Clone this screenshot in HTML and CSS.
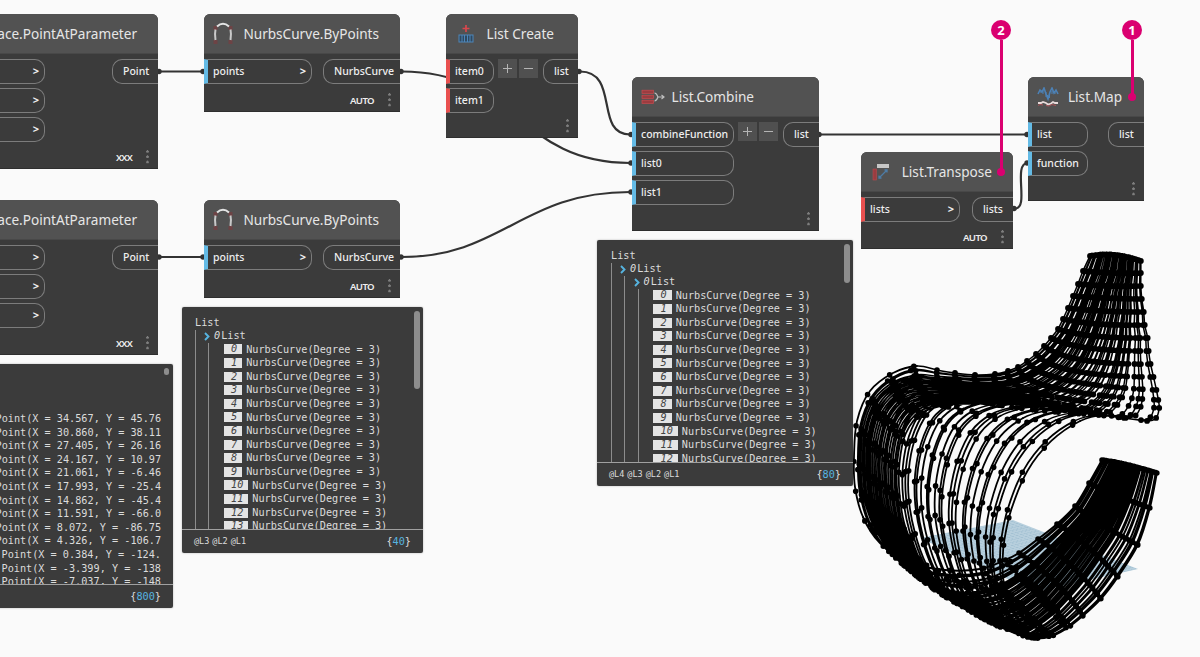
FILE: index.html
```html
<!DOCTYPE html>
<html lang="en">
<head>
<meta charset="utf-8">
<title>Node graph</title>
<link rel="stylesheet" href="styles.css">
</head>
<body>
<main class="canvas">
  <svg class="layer" width="1200" height="657" viewBox="0 0 1200 657">
    <defs>
      <pattern id="grid" width="5" height="4" patternUnits="userSpaceOnUse" patternTransform="matrix(1 .38 -1 .22 0 0)">
        <rect width="5" height="4" fill="#b7cfdd"/><path d="M0 0H5M0 0V4" stroke="#91b3c8" stroke-width=".7"/>
      </pattern>
    </defs>
    <polygon points="1013,520 1138,569 1035,592 920,538" fill="url(#grid)"/>
    <g id="mesh"></g>
  </svg>
  <svg class="layer" width="1200" height="657" viewBox="0 0 1200 657">
    <g class="wire">
      <path d="M160 71.500H203M160 257H203"/>
      <path d="M402 71.500C517 71.500 517 163 630 163"/>
      <path d="M402 257C502 257 522 192 630 192"/>
      <path d="M580 71.500C620 71.500 594 134.500 630 134.500"/>
      <path d="M820 134.500H1028"/>
      <path d="M1015 208.500C1030 208.500 1012 163 1028 163"/>
    </g>
    <g class="knob">
      <circle cx="159" cy="71.500" r="2.700"/><circle cx="203" cy="71.500" r="2.700"/>
      <circle cx="159" cy="257" r="2.700"/><circle cx="203" cy="257" r="2.700"/>
      <circle cx="401" cy="71.500" r="2.700"/><circle cx="401" cy="257" r="2.700"/>
      <circle cx="579" cy="71.500" r="2.700"/><circle cx="631" cy="134.500" r="2.700"/>
      <circle cx="631" cy="163" r="2.700"/><circle cx="631" cy="192" r="2.700"/>
      <circle cx="819" cy="134.500" r="2.700"/><circle cx="1027" cy="134.500" r="2.700"/>
      <circle cx="1014" cy="208.500" r="2.700"/><circle cx="1027" cy="163" r="2.700"/>
    </g>
  </svg>

  <section class="node surface-a">
    <header class="head"><h2 class="title">Surface.PointAtParameter</h2></header>
    <div class="body">
      <div class="ports in"><div class="port"><b class="lace">&gt;</b></div><div class="port"><b class="lace">&gt;</b></div><div class="port"><b class="lace">&gt;</b></div></div>
      <div class="ports out"><div class="port">Point</div></div>
    </div>
    <footer class="foot"><span class="mode">XXX</span><i class="dots"></i></footer>
  </section>

  <section class="node surface-b">
    <header class="head"><h2 class="title">Surface.PointAtParameter</h2></header>
    <div class="body">
      <div class="ports in"><div class="port"><b class="lace">&gt;</b></div><div class="port"><b class="lace">&gt;</b></div><div class="port"><b class="lace">&gt;</b></div></div>
      <div class="ports out"><div class="port">Point</div></div>
    </div>
    <footer class="foot"><span class="mode">XXX</span><i class="dots"></i></footer>
  </section>

  <section class="node curve-a">
    <header class="head">
      <svg class="icon" width="20" height="24" viewBox="0 0 20 24"><path d="M.5 4h4v4h-4zM15.500 4h4v4h-4zM.5 18h4v4h-4zM15.500 18h4v4h-4z" fill="#6d4345"/><g fill="none" stroke="#e4e4e4" stroke-width="2"><path d="M4 4.500Q10 -1 16 4.500"/><path d="M2.500 7.500Q1.500 12 2.500 18M17.500 7.500Q18.500 12 17.500 18" stroke="#c9c9c9"/></g></svg>
      <h2 class="title">NurbsCurve.ByPoints</h2>
    </header>
    <div class="body">
      <div class="ports in"><div class="port blue">points<b class="lace">&gt;</b></div></div>
      <div class="ports out"><div class="port">NurbsCurve</div></div>
    </div>
    <footer class="foot"><span class="mode">AUTO</span><i class="dots"></i></footer>
  </section>

  <section class="node curve-b">
    <header class="head">
      <svg class="icon" width="20" height="24" viewBox="0 0 20 24"><path d="M.5 4h4v4h-4zM15.500 4h4v4h-4zM.5 18h4v4h-4zM15.500 18h4v4h-4z" fill="#6d4345"/><g fill="none" stroke="#e4e4e4" stroke-width="2"><path d="M4 4.500Q10 -1 16 4.500"/><path d="M2.500 7.500Q1.500 12 2.500 18M17.500 7.500Q18.500 12 17.500 18" stroke="#c9c9c9"/></g></svg>
      <h2 class="title">NurbsCurve.ByPoints</h2>
    </header>
    <div class="body">
      <div class="ports in"><div class="port blue">points<b class="lace">&gt;</b></div></div>
      <div class="ports out"><div class="port">NurbsCurve</div></div>
    </div>
    <footer class="foot"><span class="mode">AUTO</span><i class="dots"></i></footer>
  </section>

  <section class="node create">
    <header class="head">
      <svg class="icon" width="16" height="20" viewBox="0 0 16 20"><path d="M8 1v7M4.500 4.500h7" stroke="#d9474d" stroke-width="1.700"/><rect x="1" y="11" width="14" height="7" fill="#30495f" stroke="#4c86ba"/><path d="M4 11v7M6.500 11v7M9.500 11v7M12 11v7" stroke="#4c86ba"/></svg>
      <h2 class="title">List Create</h2>
    </header>
    <div class="body">
      <div class="ports in"><div class="port red">item0</div><div class="port red">item1</div></div>
      <div class="steps"><span class="step plus"></span><span class="step"></span></div>
      <div class="ports out"><div class="port">list</div></div>
    </div>
    <footer class="foot"><i class="dots"></i></footer>
  </section>

  <section class="node combine">
    <header class="head">
      <svg class="icon" width="24" height="16" viewBox="0 0 24 16"><g fill="#9c3c40" stroke="#c94a4f" stroke-width=".7"><rect x="1" y="1.200" width="11.500" height="3.200"/><rect x="1" y="6.200" width="11.500" height="3.200"/><rect x="1" y="11.200" width="11.500" height="3.200"/></g><path d="M13.500 4q2 0 3.500 4h6M13.500 12q2 0 3.500-4M20.500 6l2.500 2-2.500 2" fill="none" stroke="#bdbdbd" stroke-width="1.200"/></svg>
      <h2 class="title">List.Combine</h2>
    </header>
    <div class="body">
      <div class="ports in"><div class="port blue">combineFunction</div><div class="port blue">list0</div><div class="port blue">list1</div></div>
      <div class="steps"><span class="step plus"></span><span class="step"></span></div>
      <div class="ports out"><div class="port">list</div></div>
    </div>
    <footer class="foot"><i class="dots"></i></footer>
  </section>

  <section class="node transpose">
    <header class="head">
      <svg class="icon" width="18" height="18" viewBox="0 0 18 18"><rect x="5" y="1" width="12" height="4" fill="#c6c6c6"/><rect x="1" y="6" width="3.500" height="11" fill="#9b3c40" stroke="#b84a4e" stroke-width=".6"/><path d="M7.500 14.500l7-7M7 12.500v2.500h2.500M12.500 7h2.500v2.500" stroke="#4d7ca6" stroke-width="1.300" fill="none"/></svg>
      <h2 class="title">List.Transpose</h2>
    </header>
    <div class="body">
      <div class="ports in"><div class="port red">lists<b class="lace">&gt;</b></div></div>
      <div class="ports out"><div class="port">lists</div></div>
    </div>
    <footer class="foot"><span class="mode">AUTO</span><i class="dots"></i></footer>
  </section>

  <section class="node map">
    <header class="head">
      <svg class="icon" width="22" height="20" viewBox="0 0 22 20"><path d="M1 7l2-4 2 2 2-4 2 6 2 5 2-7 2-4 2 5 2-3 2 4" fill="none" stroke="#4c80b4" stroke-width="1.600"/><path d="M9 5v5M10.500 8v4M12.500 6v5M6 3v4M15 4v3M4 3v3M18 4v3" stroke="#4c80b4"/><path d="M1 16h3l2-1 3 1 2 1.500 3-1 2-1.500 2 1h3" fill="none" stroke="#e7dada" stroke-width="1.800"/><path d="M1 18.500l2-1 3 .5M9 18.500l3 .5 3-1.500 4 1" fill="none" stroke="#a95055"/></svg>
      <h2 class="title">List.Map</h2>
    </header>
    <div class="body">
      <div class="ports in"><div class="port blue">list</div><div class="port blue">function</div></div>
      <div class="ports out"><div class="port">list</div></div>
    </div>
    <footer class="foot"><i class="dots"></i></footer>
  </section>

  <section class="panel points">
    <div class="rows">
      <p class="row">Point(X = 34.567, Y = 45.76</p>
      <p class="row">Point(X = 30.860, Y = 38.11</p>
      <p class="row">Point(X = 27.405, Y = 26.16</p>
      <p class="row">Point(X = 24.167, Y = 10.97</p>
      <p class="row">Point(X = 21.061, Y = -6.46</p>
      <p class="row">Point(X = 17.993, Y = -25.4</p>
      <p class="row">Point(X = 14.862, Y = -45.4</p>
      <p class="row">Point(X = 11.591, Y = -66.0</p>
      <p class="row">Point(X = 8.072, Y = -86.75</p>
      <p class="row">Point(X = 4.326, Y = -106.7</p>
      <p class="row">Point(X = 0.384, Y = -124.</p>
      <p class="row">Point(X = -3.399, Y = -138</p>
      <p class="row">Point(X = -7.037, Y = -148</p>
    </div>
    <i class="thumb"></i>
    <footer class="sum"><span></span><span>{<em class="count">800</em>}</span></footer>
  </section>

  <section class="panel forty">
    <div class="rows">
      <p class="row">List</p>
      <div class="branch">
        <p class="row sub"><svg width="6" height="9" viewBox="0 0 6 9"><path d="M1 1l3.500 3.500L1 8" fill="none" stroke="#56b4e0" stroke-width="1.900"/></svg><i>0</i>List</p>
        <div class="branch">
          <p class="row"><i class="idx">0</i>NurbsCurve(Degree = 3)</p>
          <p class="row"><i class="idx">1</i>NurbsCurve(Degree = 3)</p>
          <p class="row"><i class="idx">2</i>NurbsCurve(Degree = 3)</p>
          <p class="row"><i class="idx">3</i>NurbsCurve(Degree = 3)</p>
          <p class="row"><i class="idx">4</i>NurbsCurve(Degree = 3)</p>
          <p class="row"><i class="idx">5</i>NurbsCurve(Degree = 3)</p>
          <p class="row"><i class="idx">6</i>NurbsCurve(Degree = 3)</p>
          <p class="row"><i class="idx">7</i>NurbsCurve(Degree = 3)</p>
          <p class="row"><i class="idx">8</i>NurbsCurve(Degree = 3)</p>
          <p class="row"><i class="idx">9</i>NurbsCurve(Degree = 3)</p>
          <p class="row"><i class="idx">10</i>NurbsCurve(Degree = 3)</p>
          <p class="row"><i class="idx">11</i>NurbsCurve(Degree = 3)</p>
          <p class="row"><i class="idx">12</i>NurbsCurve(Degree = 3)</p>
          <p class="row"><i class="idx">13</i>NurbsCurve(Degree = 3)</p>
        </div>
      </div>
    </div>
    <i class="thumb"></i>
    <footer class="sum"><span class="levels"><span>@L3</span><span>@L2</span><span>@L1</span></span><span>{<em class="count">40</em>}</span></footer>
  </section>

  <section class="panel eighty">
    <div class="rows">
      <p class="row">List</p>
      <div class="branch">
        <p class="row sub"><svg width="6" height="9" viewBox="0 0 6 9"><path d="M1 1l3.500 3.500L1 8" fill="none" stroke="#56b4e0" stroke-width="1.900"/></svg><i>0</i>List</p>
        <div class="branch">
          <p class="row sub"><svg width="6" height="9" viewBox="0 0 6 9"><path d="M1 1l3.500 3.500L1 8" fill="none" stroke="#56b4e0" stroke-width="1.900"/></svg><i>0</i>List</p>
          <div class="branch">
            <p class="row"><i class="idx">0</i>NurbsCurve(Degree = 3)</p>
            <p class="row"><i class="idx">1</i>NurbsCurve(Degree = 3)</p>
            <p class="row"><i class="idx">2</i>NurbsCurve(Degree = 3)</p>
            <p class="row"><i class="idx">3</i>NurbsCurve(Degree = 3)</p>
            <p class="row"><i class="idx">4</i>NurbsCurve(Degree = 3)</p>
            <p class="row"><i class="idx">5</i>NurbsCurve(Degree = 3)</p>
            <p class="row"><i class="idx">6</i>NurbsCurve(Degree = 3)</p>
            <p class="row"><i class="idx">7</i>NurbsCurve(Degree = 3)</p>
            <p class="row"><i class="idx">8</i>NurbsCurve(Degree = 3)</p>
            <p class="row"><i class="idx">9</i>NurbsCurve(Degree = 3)</p>
            <p class="row"><i class="idx">10</i>NurbsCurve(Degree = 3)</p>
            <p class="row"><i class="idx">11</i>NurbsCurve(Degree = 3)</p>
            <p class="row"><i class="idx">12</i>NurbsCurve(Degree = 3)</p>
          </div>
        </div>
      </div>
    </div>
    <i class="thumb"></i>
    <footer class="sum"><span class="levels"><span>@L4</span><span>@L3</span><span>@L2</span><span>@L1</span></span><span>{<em class="count">80</em>}</span></footer>
  </section>

  <div class="callout one"><span class="badge">1</span><i class="stem"></i></div>
  <div class="callout two"><span class="badge">2</span><i class="stem"></i></div>
</main>
<script src="mesh.js"></script>
</body>
</html>
```
FILE: styles.css
```css
* { box-sizing: border-box; }
body { margin: 0; background: #fafafa; font-family: "Noto Sans", "Open Sans", sans-serif; }
.canvas { position: relative; width: 1200px; height: 657px; overflow: hidden; }
.layer { position: absolute; left: 0; top: 0; }
.wire { fill: none; stroke: #333; stroke-width: 2.2; }
.knob { fill: #333; }

.node { position: absolute; display: flex; flex-direction: column; background: #3b3b3b; border-radius: 6px 6px 0 0; overflow: hidden; border-bottom: 1px solid #2e2e2e; color: #eee; }
.surface-a { left: -62px; top: 14px; width: 220px; height: 155px; }
.surface-b { left: -62px; top: 200px; width: 220px; height: 155px; }
.curve-a { left: 204px; top: 14px; width: 196px; height: 98px; }
.curve-b { left: 204px; top: 200px; width: 196px; height: 98px; }
.create { left: 446px; top: 14px; width: 132px; height: 124px; }
.combine { left: 632px; top: 77px; width: 187px; height: 154px; }
.transpose { left: 861px; top: 152px; width: 152px; height: 97px; }
.map { left: 1028px; top: 77px; width: 116px; height: 124px; }

.head { height: 40px; flex: none; background: #525252; display: flex; align-items: center; padding: 0 21px 0 9px; border-bottom: 1px solid #484848; }
.icon { flex: none; }
.title { margin: 0 0 0 auto; font-size: 13.6px; font-weight: 400; white-space: nowrap; color: #e6e6e6; }
.create .head { padding: 0 24px 0 12px; }
.combine .head { padding-right: 65px; }
.transpose .head { padding-left: 11px; }
.map .head { padding-right: 22px; }

.body { flex: 1; display: flex; align-items: flex-start; padding-top: 5px; }
.ports { display: flex; flex-direction: column; gap: 4px; }
.out { margin-left: auto; }
.port { height: 25px; display: flex; align-items: center; font-size: 10.5px; font-weight: 500; color: #eee; border: 1px solid #7c7c7c; white-space: nowrap; }
.in .port { border-left: 0; border-radius: 0 10px 10px 0; padding: 0 5px 2px 9px; }
.out .port { border-right: 0; border-radius: 10px 0 0 10px; padding: 0 9px 2px 10px; }
.in .blue { border-left: 4px solid #64bbe6; padding-left: 5px; }
.in .red { border-left: 4px solid #e9504f; padding-left: 5px; }
.lace { margin-left: auto; font-size: 11px; }
.surface-a .in, .surface-b .in { width: 107px; }
.surface-a .out, .surface-b .out { width: 46px; }
.curve-a .in, .curve-b .in { width: 108px; }
.curve-a .out, .curve-b .out { width: 77px; }
.create .in { width: 48px; }
.create .out { width: 35px; }
.combine .in { width: 102px; }
.combine .out { width: 36px; }
.transpose .in { width: 99px; }
.transpose .out { width: 41px; }
.map .in { width: 60px; }
.map .out { width: 36px; }

.steps { display: flex; gap: 2px; margin-left: 4px; }
.step { width: 19px; height: 19px; background: linear-gradient(#b4b4b4, #b4b4b4) center / 9px 1px no-repeat #505050; }
.plus { background: linear-gradient(#b4b4b4, #b4b4b4) center / 9px 1px no-repeat, linear-gradient(#b4b4b4, #b4b4b4) center / 1px 9px no-repeat #505050; }

.foot { height: 23px; flex: none; display: flex; justify-content: flex-end; align-items: center; gap: 14px; padding-right: 9px; font-size: 9.6px; font-weight: 600; }
.mode { letter-spacing: -.8px; margin-top: 1px; }
.dots { width: 3px; height: 14px; background: radial-gradient(circle at 1.5px 1.5px, #7e7e7e 1.1px, transparent 1.5px) 0 0 / 3px 5.3px; }
.curve-a .mode, .curve-b .mode, .transpose .mode { letter-spacing: -.6px; }

.panel { position: absolute; display: flex; flex-direction: column; background: #3b3b3b; border-radius: 2px; overflow: hidden; box-shadow: 0 0 2px rgba(0, 0, 0, .3); font: 10.2px/13.65px "DejaVu Sans Mono", monospace; color: #dcdcdc; }
.points { left: -20px; top: 364px; width: 193px; height: 244px; }
.forty { left: 182px; top: 307px; width: 241px; height: 246px; }
.eighty { left: 597px; top: 240px; width: 256px; height: 246px; }
.rows { flex: 1; min-height: 0; overflow: hidden; padding: 9px 0 0 13px; }
.points .rows { padding: 48px 0 0 15.5px; }
.eighty .rows { padding-left: 14px; }
.points .row:nth-child(n+11) { padding-left: 6px; }
.row { margin: 0; height: 13.6px; white-space: pre; display: flex; align-items: center; }
.branch { border-left: 1px solid #8c8c8c; padding-left: 12px; }
.forty .branch .branch { padding-left: 12.5px; }
.eighty .branch .branch { padding-left: 12.5px; }
.sub { margin-left: -4px; height: 13px; gap: 1px; }
.sub i { margin-left: 3px; }
.branch .branch .row .idx { margin-left: 2px; }
.idx { background: #e4e4e4; color: #444; height: 10px; line-height: 10.500px; padding: 0 5px 0 7.500px; margin-right: 4px; }
.thumb { position: absolute; right: 3px; top: 4px; width: 6px; height: 78px; border-radius: 3px; background: #8d8d8d; }
.eighty .thumb { height: 39px; }
.points .thumb { height: 7px; width: 5px; right: 4px; }
.sum { flex: none; height: 24px; border-top: 1px solid #a0a0a0; display: flex; justify-content: space-between; align-items: center; padding: 0 12px; }
.levels { display: flex; gap: 3px; font-size: 8.500px; }
.count { font-style: normal; color: #56b4e0; }

.callout { position: absolute; top: 20px; width: 20px; display: flex; flex-direction: column; align-items: center; }
.one { left: 1122px; }
.two { left: 991px; }
.badge { width: 20px; height: 20px; border-radius: 50%; background: #da0070; color: #fff; font: 700 13px/20px "Noto Sans", sans-serif; text-align: center; }
.stem { width: 3px; height: 57px; background: #da0070; }
.two .stem { height: 132px; }
.stem::after { content: ""; display: block; width: 8px; height: 8px; border-radius: 50%; background: #da0070; margin: 53px 0 0 -2.500px; }
.two .stem::after { margin-top: 128px; }
```
FILE: mesh.js
```js
// Three guide profiles of the swept band: left edge, middle, right edge.
const left = [[1090,256],[1083,271],[1078,284],[1073,296],[1068,308],[1063,319],[1058,329],[1051,338],[1044,346],[1036,354],[1027,361],[1018,367],[1008,371],[995,374],[975,375],[955,373],[937,370],[917,366],[893,373],[870,391],[857,421],[854,457],[855,487],[863,517],[880,543],[908,562],[945,570],[980,569],[1003,561],[1019,553],[1038,539],[1057,524],[1075,506],[1089,483],[1102,460]];
const middle = [[1115,255],[1112,273],[1108,286],[1105,298],[1102,311],[1098,324],[1094,336],[1089,348],[1083,360],[1075,371],[1066,380],[1055,388],[1042,394],[1028,397],[1012,397],[995,397],[975,400],[955,406],[938,420],[926,446],[920,477],[920,507],[926,539],[937,570],[955,600],[980,617],[1002,623],[1021,614],[1040,600],[1056,583],[1071,565],[1086,545],[1101,524],[1116,495],[1128,465]];
const right = [[1141,261],[1141,273],[1141,286],[1142,299],[1144,312],[1145,325],[1148,338],[1149,351],[1151,364],[1154,377],[1157,390],[1159,400],[1160,408],[1157,418],[1148,421],[1125,418],[1105,415],[1081,421],[1052,441],[1028,471],[1012,509],[1005,539],[1003,560],[1004,582],[1011,604],[1022,624],[1034,637],[1049,637],[1066,629],[1083,616],[1101,599],[1118,577],[1138,545],[1150,508],[1157,473]];

const mix = (k, axis, v) =>
  left[k][axis] * (1 - v) * (1 - 2 * v) + middle[k][axis] * 4 * v * (1 - v) + right[k][axis] * v * (2 * v - 1);

const curves = [];
for (let i = 0; i < 38; i++) {
  const v = Math.min(1, Math.max(0, i / 37 + Math.sin(i * 2.3) * 0.009));
  curves.push([() => v, false]);
}
// A second set bunches at the outer ribs and spreads over the neck and the base.
const ease = s => { s = Math.min(1, Math.max(0, s)); return s * s * (3 - 2 * s); };
for (let i = 0; i < 20; i++) {
  const j = i / 19;
  curves.push([k => {
    const w = k < 20 ? ease((k - 13) / 6) : 1 - ease((k - 22) / 5);
    return (0.06 + j * 0.3) * w + (0.2 + j * (k > 22 ? 0.5 : 0.62)) * (1 - w);
  }, true]);
}

const neck = [], ribs = [], base = [], small = [], large = [];
const dot = (x, y, r) => `M${x - r} ${y}a${r} ${r} 0 1 0 ${2 * r} 0a${r} ${r} 0 1 0 ${-2 * r} 0`;
curves.forEach(([v, second], i) => {
  const p = left.map((_, k) => [mix(k, 0, v(k)), mix(k, 1, v(k))]);
  for (let k = 0; k < p.length - 1; k++) {
    const a = p[k - 1] || p[k], b = p[k], c = p[k + 1], e = p[k + 2] || c;
    const q = [b[0] + (c[0] - a[0]) / 6, b[1] + (c[1] - a[1]) / 6];
    const r = [c[0] - (e[0] - b[0]) / 6, c[1] - (e[1] - b[1]) / 6];
    (k < 17 ? neck : k < 23 ? ribs : base).push(`M${b}C${q} ${r} ${c}`);
    const s = k < 17 || k > 28 ? 0 : 0.14 * (1 + Math.sin(i * 1.9));
    const u = 1 - s;
    const at = n => u * u * u * b[n] + 3 * u * u * s * q[n] + 3 * u * s * s * r[n] + s * s * s * c[n];
    (k < 16 ? small : large).push(dot(at(0), at(1), k < 16 ? 2.9 : 2.8));
  }
  large.push(dot(...p[p.length - 1], 2.8));
});
document.getElementById("mesh").innerHTML =
  `<g fill="none" stroke="#000" stroke-linecap="round">
     <path d="${neck.join("")}" stroke-width="1.5"/>
     <path d="${ribs.join("")}" stroke-width="1.8"/>
     <path d="${base.join("")}" stroke-width="2"/>
   </g><path d="${small.join("")}"/><path d="${large.join("")}"/>`;
```
